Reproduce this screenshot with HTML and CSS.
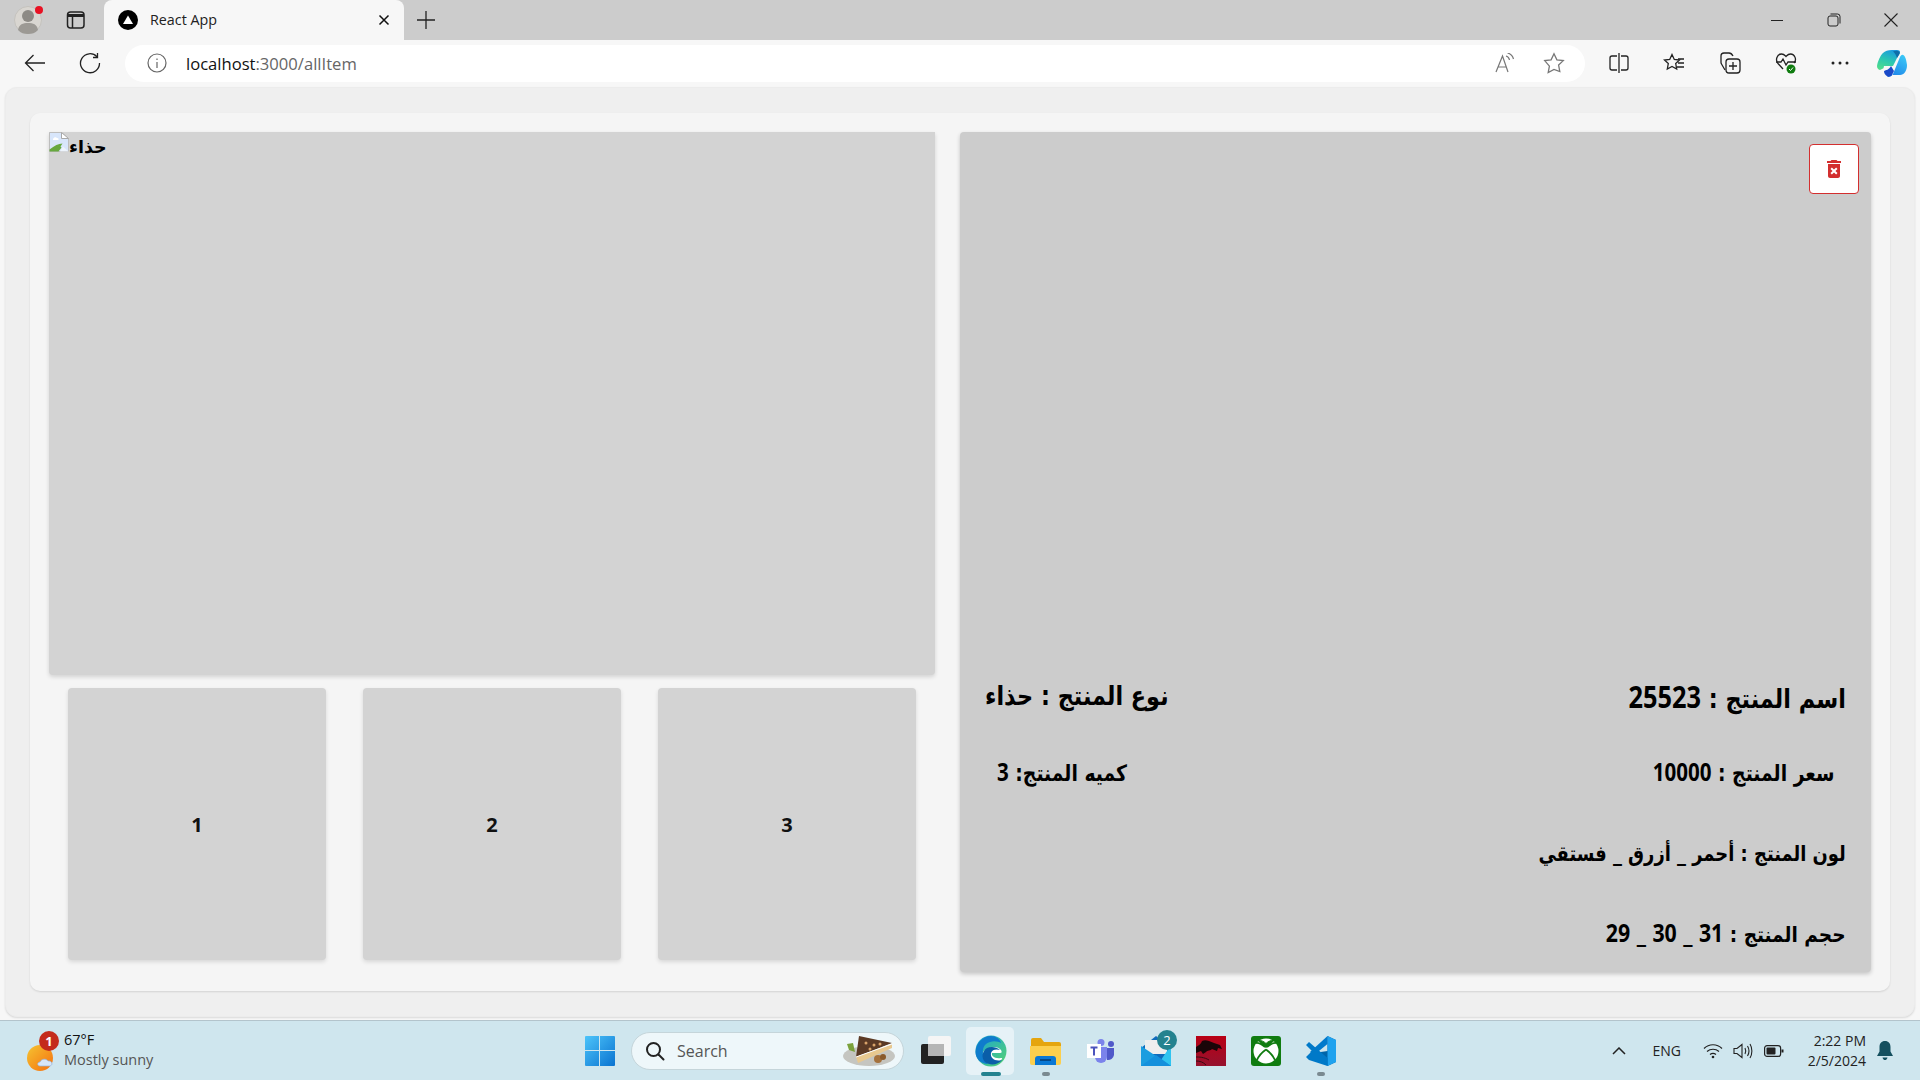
FILE: index.html
```html
<!DOCTYPE html>
<html lang="en">
<head>
<meta charset="utf-8">
<title>React App</title>
<link rel="stylesheet" href="styles.css">
</head>
<body>
<div class="window">
  <header class="tabstrip">
    <div class="strip-left">
      <svg class="ic-profile" width="32" height="32" viewBox="0 0 32 32"><circle cx="14" cy="16" r="13.5" fill="#d9d6d1" stroke="#c4c2bd"/><circle cx="14" cy="12" r="6" fill="#8d8a85"/><path d="M4 26c1-6 5-7 10-7s9 1 10 7c-3 3-6 4-10 4s-7-1-10-4z" fill="#9c9994"/><circle cx="25" cy="6" r="4" fill="#e81123"/></svg>
      <svg class="ic-tabs" width="20" height="20" viewBox="0 0 20 20" fill="none" stroke="#222" stroke-width="1.5"><rect x="1.5" y="2" width="16.5" height="16" rx="3"/><path d="M1.5 5.500h16.5" stroke-width="3"/><path d="M6.500 6v12"/></svg>
    </div>
    <div class="tab">
      <svg width="20" height="20" viewBox="0 0 20 20"><circle cx="10" cy="10" r="10" fill="#000"/><path d="M10 5.500l5 8.500H5z" fill="#fff"/></svg>
      <span class="tab-title">React App</span>
      <svg class="tab-close" width="12" height="12" viewBox="0 0 12 12" stroke="#111" stroke-width="1.5"><path d="M1.500 1.500l9 9M10.500 1.500l-9 9"/></svg>
    </div>
    <svg class="ic-plus" width="18" height="18" viewBox="0 0 18 18" stroke="#222" stroke-width="1.3"><path d="M9 0v18M0 9h18"/></svg>
    <div class="winctl">
      <svg width="14" height="14" viewBox="0 0 14 14" stroke="#222"><path d="M1 7.500h12"/></svg>
      <svg width="14" height="14" viewBox="0 0 14 14" fill="none" stroke="#222"><rect x="1" y="3" width="10" height="10" rx="2"/><path d="M3.500 1h7a2.500 2.500 0 0 1 2.500 2.500v7"/></svg>
      <svg width="14" height="14" viewBox="0 0 14 14" stroke="#222" stroke-width="1.100"><path d="M.5.500l13 13M13.500.500l-13 13"/></svg>
    </div>
  </header>

  <nav class="toolbar">
    <svg class="ic-back" width="22" height="18" viewBox="0 0 22 18" fill="none" stroke="#222" stroke-width="1.300"><path d="M21 9H1.500M9.500 1L1.500 9l8 8"/></svg>
    <svg class="ic-reload" width="22" height="22" viewBox="0 0 22 22" fill="none" stroke="#222" stroke-width="1.300"><path d="M18 4.800A9.500 9.500 0 1 0 20.500 11"/><path d="M18.500 1v4.500H14"/></svg>
    <div class="omnibox">
      <svg width="20" height="20" viewBox="0 0 20 20" fill="none" stroke="#666" stroke-width="1.200"><circle cx="10" cy="10" r="9"/><path d="M10 9v6M10 5.500v1.500"/></svg>
      <span class="url"><span class="url-host">localhost</span><span class="url-rest">:3000/allItem</span></span>
      <svg class="ic-read" width="20" height="20" viewBox="0 0 20 20" fill="none" stroke="#777" stroke-width="1.200"><path d="M1 19L7.500 3 13 19M3.200 14h8.600"/><path d="M11 3c2 .5 3 1.500 3.500 4M12.500 0c3 .7 5 2.500 6 6" /></svg>
      <svg class="ic-star" width="22" height="22" viewBox="0 0 22 22" fill="none" stroke="#777" stroke-width="1.300"><path d="M11 1.800l2.900 6 6.400.8-4.700 4.500 1.200 6.500L11 17.400l-5.800 3.200 1.200-6.500L1.700 8.600l6.400-.8z"/></svg>
    </div>
    <div class="tools">
      <svg width="20" height="20" viewBox="0 0 20 20" fill="none" stroke="#222" stroke-width="1.300"><path d="M8 3H3a2 2 0 0 0-2 2v10a2 2 0 0 0 2 2h5M12 3h5a2 2 0 0 1 2 2v10a2 2 0 0 1-2 2h-5M10 0v20"/></svg>
      <svg width="22" height="20" viewBox="0 0 22 20" fill="none" stroke="#222" stroke-width="1.300"><path d="M9 1.500l2.300 5 5.200.6-3.800 3.500 1 5.400L9 13.500 4.300 16l1-5.400L1.500 7.100l5.200-.6z"/><path d="M15 6h6M15 10h6M14 14h7"/></svg>
      <svg width="22" height="22" viewBox="0 0 22 22" fill="none" stroke="#222" stroke-width="1.300"><path d="M6 18L2.500 12a3 3 0 0 1-.5-2V4a3 3 0 0 1 3-3h5c2 0 3 1 4 3"/><rect x="7" y="7" width="14" height="14" rx="3"/><path d="M14 10v8M10 14h8"/></svg>
      <svg width="22" height="22" viewBox="0 0 22 22" fill="none" stroke="#222" stroke-width="1.300"><path d="M8 17l-5-5.500C0 8 2 2 6.500 2 9 2 10 3.500 11 4.500 12 3.500 13 2 15.500 2 20 2 22 8 19 11"/><path d="M1 10h5l2-3 3 6 2-3h8"/><circle cx="16" cy="17" r="4.500" fill="#107c10" stroke="none"/><path d="M14 17l1.500 1.500 2.500-3" stroke="#fff" stroke-width="1"/></svg>
      <svg width="18" height="4" viewBox="0 0 18 4" fill="#222"><circle cx="2" cy="2" r="1.500"/><circle cx="9" cy="2" r="1.500"/><circle cx="16" cy="2" r="1.500"/></svg>
      <svg class="ic-copilot" width="30" height="27" viewBox="0 0 30 27">
        <defs>
          <linearGradient id="cpa" x1=".7" y1="0" x2=".3" y2="1"><stop offset="0" stop-color="#1b98e0"/><stop offset=".55" stop-color="#2cc8b0"/><stop offset="1" stop-color="#4fdc8c"/></linearGradient>
          <linearGradient id="cpb" x1=".2" y1="1" x2=".8" y2="0"><stop offset="0" stop-color="#1c7fe8"/><stop offset="1" stop-color="#3bc8f6"/></linearGradient>
        </defs>
        <path d="M15 0h5c2 0 3 .8 3 2L16 16H7l-.5 2.200L3 20c-2-.5-3-2-3-4C.5 12 3.500 5 6 3c2-2 5-3 9-3z" fill="url(#cpa)"/>
        <path d="M16 1.500c2-1 5-1 6.500.5 1 1 0 2-.5 3L20 8c-1-3-2-5-4-6.500z" fill="#0f6ea8"/>
        <path d="M10 27c3 0 5-1 6-3l7-17c1-1.500 2-2.500 3-2 2 .5 3.500 5 4 10 0 6-3 10-7 10H13z" fill="url(#cpb)"/>
        <path d="M7 21c2-1 5-1 7-5l3 5-2 4c-1 1.500-3 2-4.500 1.500C8 25 7 23 7 21z" fill="#1a49c8"/>
      </svg>
    </div>
  </nav>

  <main class="viewport">
    <section class="card">
      <div class="gallery">
        <div class="hero">
          <svg class="broken" width="20" height="20" viewBox="0 0 20 20"><path d="M.5.500h12l7 6v13H.5z" fill="#d8e6fb" stroke="#bdbdbd"/><path d="M12.500.500v6h7z" fill="#fff" stroke="#a9a9a9"/><path d="M4 7c1-2 3-2 4-1 2 0 2 2 1 2H4z" fill="#fff"/><path d="M.5 19.500v-2c5-4 9-6 13-6l-2 3 1 1-3 4z" fill="#67a83f"/><path d="M11 19.500l3-5 5.500 5z" fill="#eef4fc"/></svg><span class="alt" lang="ar" dir="rtl">حذاء</span>
        </div>
        <div class="thumbs">
          <div class="thumb">1</div>
          <div class="thumb">2</div>
          <div class="thumb">3</div>
        </div>
      </div>
      <article class="details" dir="rtl" lang="ar">
        <button class="delete" type="button" aria-label="حذف">
          <svg width="24" height="24" viewBox="0 0 24 24" fill="#d32f2f"><path d="M6 19c0 1.100.9 2 2 2h8c1.100 0 2-.9 2-2V7H6v12zm2.460-7.120 1.410-1.410L12 12.590l2.120-2.120 1.410 1.410L13.410 14l2.120 2.120-1.410 1.410L12 15.410l-2.120 2.120-1.410-1.410L10.590 14l-2.130-2.120zM15.500 4l-1-1h-5l-1 1H5v2h14V4z"/></svg>
        </button>
        <div class="row row-lg">
          <span class="field">اسم المنتج : <b class="num">25523</b></span>
          <span class="field field-end">نوع المنتج : حذاء</span>
        </div>
        <div class="row row-md">
          <span class="field">سعر المنتج : <b class="num">10000</b></span>
          <span class="field field-end">كميه المنتج: <b class="num">3</b></span>
        </div>
        <div class="row row-line row-color">
          <span class="field">لون المنتج : أحمر _ أزرق _ فستقي</span>
        </div>
        <div class="row row-line row-last">
          <span class="field">حجم المنتج : <b class="num">31</b> _ <b class="num">30</b> _ <b class="num">29</b></span>
        </div>
      </article>
    </section>
  </main>

  <footer class="taskbar">
    <div class="weather">
      <svg class="weather-ic" width="40" height="40" viewBox="0 0 40 40">
        <defs><linearGradient id="sun" x1="0" y1="0" x2="1" y2="1"><stop offset="0" stop-color="#f5c431"/><stop offset="1" stop-color="#f56f0f"/></linearGradient></defs>
        <circle cx="15" cy="27" r="13" fill="url(#sun)"/>
        <path d="M15 35c-3 0-3-4 0-4 1-3 6-4 8-1 4-1 6 5 1 5z" fill="#d8e6f8" stroke="#93b5e0" stroke-width=".7"/>
        <circle cx="24" cy="10" r="10" fill="#c42b1c"/>
      </svg>
      <span class="weather-badge">1</span>
      <div class="weather-text"><span class="temp">67°F</span><span class="cond">Mostly sunny</span></div>
    </div>
    <div class="apps">
      <div class="slot">
        <svg width="30" height="30" viewBox="0 0 30 30"><defs><linearGradient id="win" x1="0" y1="0" x2="1" y2="1"><stop offset="0" stop-color="#4cc4fa"/><stop offset="1" stop-color="#0a73d0"/></linearGradient></defs><path d="M1 0h13v14H0V1a1 1 0 0 1 1-1zM15 0h14a1 1 0 0 1 1 1v13H15zM0 15h14v15H1a1 1 0 0 1-1-1zM15 15h15v14a1 1 0 0 1-1 1H15z" fill="url(#win)"/></svg>
      </div>
      <div class="search">
        <svg width="20" height="20" viewBox="0 0 20 20" fill="none" stroke="#222" stroke-width="2"><circle cx="8.500" cy="8.500" r="6.500"/><path d="M13.500 13.500L18.500 18.500" stroke-linecap="round"/></svg>
        <span class="search-text">Search</span>
        <svg class="pie" width="54" height="32" viewBox="0 0 54 32">
          <ellipse cx="27" cy="21" rx="26" ry="10" fill="#c5c5c0"/>
          <path d="M5 9l6-1 2 9-6-2z" fill="#7ba23c"/>
          <path d="M14 22L17 1l33 7z" fill="#5b3a25"/>
          <path d="M14 22l36-13v4L16 28z" fill="#e8c88f"/>
          <path d="M14 22l36-13" stroke="#fff" stroke-width="1"/>
          <circle cx="24" cy="8" r="1.500" fill="#d9a36a"/><circle cx="32" cy="10" r="1.500" fill="#d9a36a"/><circle cx="28" cy="14" r="1.500" fill="#d9a36a"/><circle cx="38" cy="9" r="1.500" fill="#d9a36a"/>
          <circle cx="36" cy="24" r="4" fill="#a5713c"/><circle cx="41" cy="22" r="3" fill="#8a5a2b"/>
        </svg>
      </div>
      <div class="slot">
        <svg width="30" height="30" viewBox="0 0 30 30"><rect x="7" y="0" width="23" height="20" rx="2" fill="#f5f5f5"/><rect y="8" width="23" height="20" rx="2" fill="#222"/><rect x="7" y="8" width="16" height="12" fill="#b5b5b5"/></svg>
      </div>
      <div class="slot slot-active">
        <svg width="32" height="32" viewBox="0 0 32 32"><defs><linearGradient id="ed1" x1="0" y1="0" x2="1" y2="1"><stop offset="0" stop-color="#1aa3d8"/><stop offset="1" stop-color="#54d36f"/></linearGradient></defs><circle cx="16" cy="16" r="15.500" fill="url(#ed1)"/><path d="M.5 17C1 8 8 1 16 1c5 0 9 3 10 7-3-2-10-3-15 1C6 13 7 24 13 29 6 29 .5 24 .5 17z" fill="#0f7ccc"/><path d="M13 15c2-4 10-4 13 0 1 2 1 3-1 3H17c-1 3 3 6 9 5 2 0 1 1 0 2-4 5-17 5-18-6-.5-3 3-5 5-4z" fill="#fff"/><path d="M12 13c4-2 10-1 13 2-3-1-8-1-9 3-1 5 4 9 11 7-4 5-12 6-17 2-4-4-3-11 2-14z" fill="#0a5ea8"/></svg>
        <i class="run run-active"></i>
      </div>
      <div class="slot">
        <svg width="31" height="28" viewBox="0 0 31 28"><path d="M1 3a2 2 0 0 1 2-2h8l3 4h15a2 2 0 0 1 2 2v3H1z" fill="#e5a50e"/><path d="M0 9h31v17a2 2 0 0 1-2 2H2a2 2 0 0 1-2-2z" fill="#fccf4d"/><path d="M5 22a3 3 0 0 1 3-3h15a3 3 0 0 1 3 3v6H5z" fill="#0a78d4"/><path d="M10 23h11" stroke="#043a70" stroke-width="1.500"/></svg>
        <i class="run"></i>
      </div>
      <div class="slot">
        <svg width="28" height="24" viewBox="0 0 28 24"><circle cx="24" cy="5" r="3" fill="#5059c9"/><path d="M20 9h7v7a6 6 0 0 1-7 5z" fill="#5059c9"/><circle cx="14" cy="3.500" r="3.500" fill="#7b83eb"/><path d="M8 8h12v10a6 6 0 0 1-12 0z" fill="#7b83eb"/><rect y="5" width="14" height="14" fill="#fff"/><path d="M3.500 8.500h7M7 8.500v8" stroke="#4b53bc" stroke-width="2"/></svg>
      </div>
      <div class="slot">
        <svg width="30" height="30" viewBox="0 0 30 30"><path d="M0 12L15 0l15 12v18H0z" fill="#0f6cbd"/><path d="M4 4h22v14H4z" fill="#eee"/><path d="M30 9v21H16z" fill="#2fc4f0"/><path d="M0 10l30 20H0z" fill="#1a9de0"/><path d="M0 30l15-11 15 11z" fill="#1490dc"/></svg>
        <span class="mail-badge">2</span>
      </div>
      <div class="slot">
        <svg width="30" height="30" viewBox="0 0 30 30"><defs><linearGradient id="red" x1="0" y1="0" x2="0" y2="1"><stop offset="0" stop-color="#b90015"/><stop offset="1" stop-color="#96122e"/></linearGradient></defs><rect width="30" height="30" fill="url(#red)"/><path d="M0 11c3-2 5-3 6-6 2-1 4-1 7 0l5 2 6 2 2 4-4-1-1 3-5-2c-1 2-5 1-6 3l-3 2-2-3-5 2z" fill="#1a0508"/><path d="M0 21c3 0 8 0 13 3M0 25c4 0 7 1 10 4" stroke="#3a0a12" fill="none"/></svg>
      </div>
      <div class="slot">
        <svg width="30" height="30" viewBox="0 0 30 30"><rect width="30" height="30" rx="3" fill="#107c10"/><circle cx="15" cy="15" r="12.500" fill="#fff"/><path d="M7 4.500c3-.5 6 1 8 3 2-2 5-3.500 8-3l-8 7z" fill="#107c10" stroke="#107c10" stroke-linejoin="round"/><path d="M15 13.500c-3.500 2.500-7.500 7-9 10.500M15 13.500c3.500 2.500 7.500 7 9 10.500M14 11C11 8.500 8 6.500 5 7M16 11c3-2.500 6-4.500 9-4" stroke="#107c10" stroke-width="1.800" fill="none"/></svg>
      </div>
      <div class="slot">
        <svg width="30" height="30" viewBox="0 0 30 30"><path d="M21.500 0L30 4v22l-8.500 4L8 17l13.500-2z" fill="#0065a9"/><path d="M21.500 0L30 4v22l-8.500 4z" fill="#1fa2ee"/><path d="M21.500 0v8L8 19l-4-3z" fill="#007acc"/><path d="M21.500 30v-8L3 6 0 9l6 6-6 6 3 3z" fill="#0079c8"/></svg>
        <i class="run"></i>
      </div>
    </div>
    <div class="tray">
      <svg class="ic-chev" width="14" height="8" viewBox="0 0 14 8" fill="none" stroke="#222" stroke-width="1.500"><path d="M1 7l6-6 6 6"/></svg>
      <span class="lang">ENG</span>
      <svg class="ic-wifi" width="20" height="16" viewBox="0 0 20 16" fill="none" stroke="#222" stroke-width="1.200"><path d="M1 5.500c5-5 13-5 18 0M4 8.500c3.500-3 8.500-3 12 0M7 11.500c2-1.500 4-1.500 6 0"/><circle cx="10" cy="14" r="1.300" fill="#222" stroke="none"/></svg>
      <svg class="ic-vol" width="20" height="16" viewBox="0 0 20 16" fill="none" stroke="#222" stroke-width="1.100"><path d="M1 5.500h3L9 1.500v13L4 10.500H1z"/><path d="M12 5c1 2 1 4 0 6M14.500 3c1.800 3 1.800 7 0 10M17 1c2.500 4 2.500 10 0 14"/></svg>
      <svg class="ic-bat" width="20" height="12" viewBox="0 0 20 12" fill="none" stroke="#222" stroke-width="1.200"><rect x=".6" y=".6" width="16" height="10.800" rx="2.500"/><rect x="2.500" y="2.500" width="9" height="7" rx="1" fill="#222" stroke="none"/><path d="M18.500 4.500v3" stroke-width="2"/></svg>
      <div class="clock"><span>2:22 PM</span><span>2/5/2024</span></div>
      <svg class="ic-bell" width="16" height="20" viewBox="0 0 16 20" fill="#15505f"><path d="M8 0c3.500 0 5.500 2.500 5.500 6v4.500L16 15H0l2.500-4.500V6C2.500 2.500 4.500 0 8 0z"/><path d="M5.500 16.500h5C10 18.500 9 19 8 19s-2-.5-2.500-2.500z"/></svg>
    </div>
  </footer>
</div>
</body>
</html>
```
FILE: styles.css
```css
* { box-sizing: border-box; }
html, body { margin: 0; height: 100%; overflow: hidden; }
body { font-family: "Open Sans", "Noto Sans", "DejaVu Sans", sans-serif; color: #111; }
svg { display: block; flex: none; }

.window { display: flex; flex-direction: column; height: 1080px; width: 1920px; background: #f7f7f7; }

/* tab strip */
.tabstrip { height: 40px; flex: none; display: flex; align-items: center; background: #cccccc; }
.strip-left { width: 104px; display: flex; align-items: center; padding-left: 14px; gap: 20px; }
.tab { width: 300px; height: 40px; margin-right: 13px; background: #f7f7f7; border-radius: 8px 8px 0 0; display: flex; align-items: center; padding: 0 14px 0 14px; }
.tab-title { flex: 1; margin: 0 0 2px 12px; font-size: 14.300px; color: #222; }
.winctl { margin-left: auto; display: flex; align-items: center; gap: 43px; padding-right: 22px; }

/* toolbar */
.toolbar { height: 47px; flex: none; display: flex; align-items: center; background: #f7f7f7; padding-bottom: 1px; }
.ic-back { margin-left: 24px; }
.ic-reload { margin-left: 33px; }
.omnibox { width: 1460px; height: 37px; margin-left: 24px; background: #fff; border-radius: 19px; display: flex; align-items: center; padding: 0 20px 0 22px; }
.url { margin-left: 19px; flex: 1; font-size: 16.600px; }
.url-host { color: #111; }
.url-rest { color: #666; }
.ic-star { margin-left: 28px; }
.tools { display: flex; align-items: center; margin-left: 24px; gap: 34px; }
.ic-copilot { margin-left: -6px; }

/* page */
.viewport { flex: none; height: 930px; margin: 0 5px 3px; background: #efefef; border-radius: 12px; border: 1px solid #ececec; padding: 25px 24px 25px; box-shadow: 0 1px 2px rgba(0,0,0,.12); }
.card { height: 878px; background: #f5f5f5; border-radius: 10px; box-shadow: 0 1px 2px rgba(0,0,0,.12); display: flex; gap: 25px; padding: 19px; }
.gallery { width: 886px; flex: none; display: flex; flex-direction: column; }
.hero { height: 543px; flex: none; background: #d3d3d3; border-radius: 0 0 4px 4px; box-shadow: 0 2px 4px rgba(0,0,0,.14); display: flex; align-items: flex-start; }
.alt { font-size: 17.500px; font-weight: 700; font-family: "DejaVu Sans", sans-serif; line-height: 30px; color: #000; }
.thumbs { display: grid; grid-template-columns: repeat(3, 258px); gap: 37px; padding: 0 19px; margin-top: 13px; }
.thumb { height: 272px; background: #d3d3d3; border-radius: 4px; box-shadow: 0 2px 4px rgba(0,0,0,.12); display: flex; align-items: center; justify-content: center; font-weight: 700; font-size: 20px; font-family: "Open Sans", sans-serif; color: #111; }

.details { direction: rtl; flex: 1; height: 840px; background: #cccccc; border-radius: 4px; box-shadow: 0 2px 4px rgba(0,0,0,.2); display: flex; flex-direction: column; padding: 12px 12px 0; color: #000; font-family: "DejaVu Sans", sans-serif; font-weight: 700; }
.delete { width: 50px; height: 50px; margin: 0 0 auto auto; background: #fff; border: 1px solid #d32f2f; border-radius: 4px; padding: 0; display: flex; align-items: center; justify-content: center; flex: none; }
.row { display: flex; justify-content: space-between; align-items: center; height: 36px; flex: none; }
.field { display: inline-block; white-space: nowrap; transform-origin: right center; }
.field-end { transform-origin: left center; }
.num { font-family: "Open Sans", sans-serif; font-weight: 700; }
.row-lg { font-size: 26px; padding: 0 13px; margin-bottom: 39px; }
.row-lg .field { transform: scaleX(.86); }
.row-lg .num { font-size: 29.500px; }
.row-md { font-size: 22.400px; padding: 0 25px; margin-bottom: 46px; }
.row-md .field { transform: scaleX(.84); }
.row-md .num { font-size: 24.500px; }
.row-line { font-size: 21.300px; padding: 0 13px; }
.row-line .num { font-size: 24.500px; }
.row-color { margin-bottom: 43px; }
.row-color .field { transform: scaleX(.84); }
.row-last { margin-bottom: 22px; }
.row-last .field { transform: scaleX(.87); }

/* taskbar */
.taskbar { flex: 1; display: flex; align-items: center; background: #cfe6ee; border-top: 1px solid #b3c4cc; }
.weather { width: 572px; flex: none; display: flex; align-items: center; padding-left: 25px; position: relative; }
.weather-badge { position: absolute; left: 41px; top: 1px; width: 16px; text-align: center; color: #fff; font-size: 13px; font-weight: 700; line-height: 18px; }
.weather-text { margin-left: -1px; margin-top: -2px; display: flex; flex-direction: column; font-size: 14.500px; line-height: 20px; }
.temp { color: #111; }
.cond { color: #555; }
.apps { display: flex; align-items: center; }
.slot { width: 55px; height: 48px; display: flex; align-items: center; justify-content: center; position: relative; }
.slot-active::before { content: ""; position: absolute; left: 3px; right: 4px; top: 0; bottom: 0; background: #e6f2f7; border-radius: 5px; }
.slot-active svg { position: relative; }
.run { position: absolute; bottom: -1px; left: 50%; width: 8px; height: 4px; margin-left: -4px; border-radius: 2px; background: #7a8a90; }
.run-active { width: 20px; margin-left: -10px; background: #23828f; }
.search { width: 273px; height: 38px; margin: 0 4px; border-radius: 19px; background: #eef7fa; border: 1px solid #c5d5da; display: flex; align-items: center; padding: 0 7px 0 13px; }
.search-text { flex: 1; margin-left: 12px; font-size: 16px; color: #555; }
.mail-badge { position: absolute; right: 6px; top: 3px; width: 20px; height: 20px; border-radius: 50%; background: #23828f; color: #fff; font-size: 13px; line-height: 20px; text-align: center; }
.tray { margin-left: auto; display: flex; align-items: center; padding-right: 27px; }
.ic-chev { margin-right: 27px; }
.lang { font-size: 14px; color: #222; margin-right: 22px; }
.ic-vol { margin-left: 10px; }
.ic-bat { margin-left: 11px; }
.clock { width: 80px; margin-left: 2px; display: flex; flex-direction: column; align-items: flex-end; font-size: 14px; line-height: 20px; color: #222; }
.ic-bell { margin-left: 11px; }
```
